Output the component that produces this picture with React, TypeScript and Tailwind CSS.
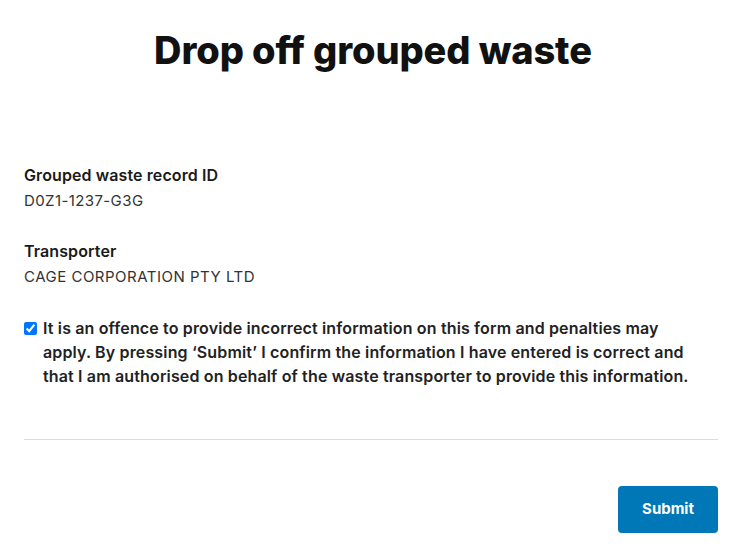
export default function App() {
  return (
    <div className="w-[750px] h-[559px] bg-white pl-6 pr-8 text-[#1a1a1a]" style={{ fontFamily: "Inter, 'Noto Sans', sans-serif" }}>
      <h1 className="pt-[26px] pl-1 text-center text-[38px] font-extrabold leading-[48px] tracking-[-0.1px] text-[#111]">
        Drop off grouped waste
      </h1>
      <div className="mt-[90px]">
        <div className="text-[16px] font-semibold leading-[22px] tracking-[0.1px]">Grouped waste record ID</div>
        <div className="mt-[4px] text-[15px] leading-[22px] tracking-[0.4px] text-[#333]">D0Z1-1237-G3G</div>
      </div>
      <div className="mt-[28px]">
        <div className="text-[16px] font-semibold leading-[22px] tracking-[0.1px]">Transporter</div>
        <div className="mt-[4px] text-[15px] leading-[22px] tracking-[0.5px] text-[#333]">CAGE CORPORATION PTY LTD</div>
      </div>
      <label className="mt-[28px] flex items-start gap-[6px]">
        <input type="checkbox" defaultChecked className="mt-[6px] h-[13px] w-[13px] shrink-0 accent-[#0075ff]" />
        <span className="w-[658px] text-[16px] font-semibold leading-[24px] tracking-[0.15px] text-[#222]">
          It is an offence to provide incorrect information on this form and penalties may apply. By pressing ‘Submit’ I confirm the information I have entered is correct and that I am authorised on behalf of the waste transporter to provide this information.
        </span>
      </label>
      <div className="mt-[51px] h-px bg-[#dcdcdc]" />
      <div className="mt-[46px] flex justify-end">
        <button className="h-[47px] w-[100px] rounded-[4px] bg-[#0077b6] text-[15px] font-bold text-white">
          Submit
        </button>
      </div>
    </div>
  );
}
